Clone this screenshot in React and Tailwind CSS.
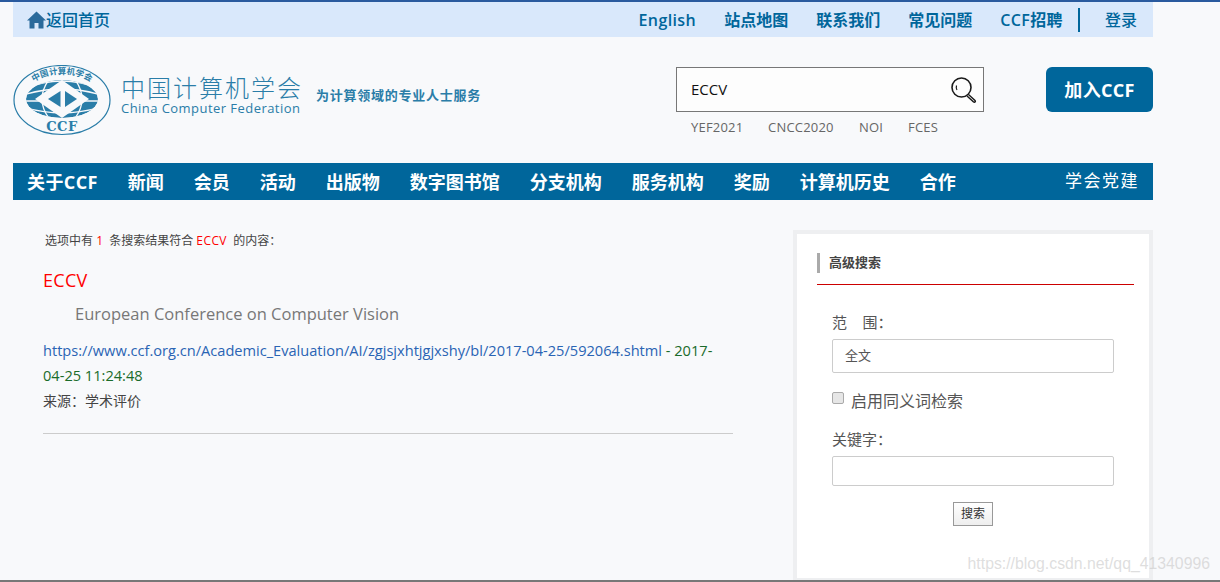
const FONT = { fontFamily: '"Open Sans", "Noto Sans CJK SC", sans-serif' };

const TOP_LINKS = [
  ["English", "tracking-[0.4px]"],
  ["站点地图", ""],
  ["联系我们", ""],
  ["常见问题", ""],
  ["CCF招聘", "tracking-[0.4px]"],
];
const NAV = [
  ["关于CCF", "tracking-[0.4px]"],
  ["新闻", ""],
  ["会员", ""],
  ["活动", ""],
  ["出版物", ""],
  ["数字图书馆", ""],
  ["分支机构", ""],
  ["服务机构", ""],
  ["奖励", ""],
  ["计算机历史", ""],
  ["合作", ""],
];
const HOT = [
  ["YEF2021", "w-[77px]"],
  ["CNCC2020", "w-[91px]"],
  ["NOI", "w-[49px]"],
  ["FCES", "w-auto"],
];

function Logo() {
  const blue = "#2a7da8";
  return (
    <svg width="98" height="71" viewBox="0 0 98 71" className="shrink-0">
      <defs>
        <path id="ccf-arc" d="M9 36 A40 27 0 0 1 89 36" />
        <clipPath id="ccf-globe">
          <ellipse cx="49" cy="34" rx="36" ry="19" />
        </clipPath>
      </defs>
      <ellipse cx="49" cy="35" rx="48" ry="34.5" fill="none" stroke={blue} strokeWidth="1.2" />
      <text fontSize="8.5" fontWeight="700" fill={blue} style={FONT}>
        <textPath href="#ccf-arc" startOffset="50%" textAnchor="middle">中国计算机学会</textPath>
      </text>
      {/* globe: solid ellipse cut by meridians and parallels */}
      <g clipPath="url(#ccf-globe)">
        <ellipse cx="49" cy="34" rx="36" ry="19" fill={blue} />
        <g fill="none" stroke="#f8f9fb" strokeWidth="1.3">
          <path d="M10 24 Q49 8 88 24" />
          <path d="M10 30 Q49 18 88 30" />
          <path d="M10 36 H88" />
          <path d="M10 42 Q49 54 88 42" />
          <path d="M10 48 Q49 62 88 48" />
          <path d="M38 12 Q20 34 38 56" />
          <path d="M60 12 Q78 34 60 56" />
        </g>
      </g>
      <path d="M22 34 L49 15 L76 34 L49 53 Z" fill="#f8f9fb" />
      <path d="M47.5 26 V42 L35 34 Z" fill={blue} />
      <path d="M52 26 V42 L64 34 Z" fill={blue} />
      <text x="49" y="66" fontSize="13" fontWeight="700" textAnchor="middle" letterSpacing="0.6" fill={blue} style={{ fontFamily: '"DejaVu Serif", serif' }}>CCF</text>
    </svg>
  );
}

function SearchGlass() {
  return (
    <svg width="28" height="28" viewBox="0 0 28 28" fill="none" stroke="#1a1a1a">
      <circle cx="11.5" cy="11.5" r="9.5" strokeWidth="1.6" />
      <path d="M6.5 9.5 Q5.8 12 7 14" strokeWidth="1.2" />
      <path d="M18.5 18.5 L25 24.5 Q26 26 24.5 26.2 Q23.5 26.3 22.5 25 L17 20" strokeWidth="1.4" />
    </svg>
  );
}

export default function App() {
  return (
    <div className="relative h-[582px] overflow-hidden bg-[#f8f9fb] border-t-2 border-b-2 border-t-[#2a5a9e] border-b-[#777]" style={FONT}>
      <div className="ml-[13px] w-[1140px]">
        {/* top strip */}
        <div className="flex items-center h-[35px] bg-[#d9e8fb] pl-[14px] pr-[16px] text-[#00669b] text-base">
          <svg width="19" height="18" viewBox="0 0 19 18" className="shrink-0">
            <path d="M9.5 0.5 L19 9.5 H16.5 V17.5 H11.5 V12 H7.5 V17.5 H2.5 V9.5 H0 Z" fill="#2b6a9b" />
          </svg>
          <span className="font-medium">返回首页</span>
          <div className="ml-auto flex items-center gap-7 font-semibold">
            {TOP_LINKS.map(([t, c]) => (
              <span key={t} className={c}>{t}</span>
            ))}
          </div>
          <span className="w-0.5 h-6 bg-[#00669b] ml-[15px] mr-[25px]" />
          <span className="font-medium">登录</span>
        </div>

        {/* logo + search */}
        <div className="flex h-[126px]">
          <div className="flex items-start pt-[28px]">
            <Logo />
            <div className="ml-[10px] mt-[11px] text-[#2a7da8]">
              <div className="text-2xl leading-[24px] tracking-[2px] whitespace-nowrap font-light">中国计算机学会</div>
              <div className="mt-[1px] text-[13px] leading-[15px] tracking-[0.45px] whitespace-nowrap">China Computer Federation</div>
            </div>
            <div className="ml-[13px] mt-[20px] text-[13px] leading-5 tracking-[0.75px] font-semibold text-[#2a7da8] whitespace-nowrap">为计算领域的专业人士服务</div>
          </div>
          <div className="ml-auto pt-[30px] w-[308px] mr-[62px]">
            <div className="flex items-center justify-between h-[45px] border border-[#777] bg-[#fdfdfd] pl-[14px] pr-[5px]">
              <span className="text-[15px] text-[#111]">ECCV</span>
              <SearchGlass />
            </div>
            <div className="flex pl-[15px] mt-[7px] text-[13px] tracking-[0.2px] leading-[16px] text-[#666]">
              {HOT.map(([t, w]) => (
                <span key={t} className={w}>{t}</span>
              ))}
            </div>
          </div>
          <div className="pt-[30px]">
            <div className="flex items-center justify-center w-[107px] h-[45px] rounded-md bg-[#00669b] text-white text-lg font-bold tracking-[0.3px]">加入CCF</div>
          </div>
        </div>

        {/* main nav */}
        <div className="flex items-center h-[37px] bg-[#00669b] pl-[14px] pr-[14px] text-white text-lg font-bold">
          <div className="flex gap-[30px]">
            {NAV.map(([t, c]) => (
              <span key={t} className={c}>{t}</span>
            ))}
          </div>
          <span className="ml-auto font-normal text-[17px] tracking-[1.5px]">学会党建</span>
        </div>

        {/* body */}
        <div className="flex pt-[30px]">
          <div className="w-[690px] ml-[30px]">
            <p className="mt-[1px] pl-[2px] text-xs leading-[20px] text-[#444] whitespace-pre">
              选项中有 <span className="text-[#f00]">1</span>  条搜索结果符合 <span className="text-[#f00] tracking-[0.4px]">ECCV</span>  的内容：
            </p>
            <h3 className="mt-[17px] text-lg tracking-[0.3px] leading-[24px] text-[#f00]">ECCV</h3>
            <p className="mt-[10px] pl-[32px] text-[16.5px] leading-[24px] text-[#777]">European Conference on Computer Vision</p>
            <p className="mt-[12px] text-[14.6px] leading-[25px] text-[#1a6b2a]">
              <span className="text-[#2a64b4]">https://www.ccf.org.cn/Academic_Evaluation/AI/zgjsjxhtjgjxshy/bl/2017-04-25/592064.shtml</span> - 2017-04-25 11:24:48
            </p>
            <p className="mt-[1px] text-sm leading-[24px] text-[#444]">来源：学术评价</p>
            <div className="mt-[20px] h-px bg-[#ccc]" />
          </div>

          <aside className="ml-[60px] w-[360px] h-[352px] border-4 border-[#eeeff1] bg-white pt-[19px] px-[20px]">
            <div className="flex items-center h-[20px] border-l-[3px] border-[#aaa] pl-[9px] text-[13px] font-bold text-[#444]">高级搜索</div>
            <div className="mt-[11px] h-px bg-[#c00] w-[317px]" />
            <div className="pl-[15px] w-[297px]">
              <label className="block mt-[26px] text-[15px] leading-[22px] text-[#555] whitespace-pre">范    围：</label>
              <div className="mt-[6px] flex items-center h-[34px] border border-[#ccc] rounded-[2px] pl-[12px] text-[13px] text-[#555]">全文</div>
              <div className="mt-[16px] flex items-start h-[24px]">
                <span className="mt-[3px] w-3 h-3 rounded-[2px] border border-[#aaa] bg-[#e6e6e6]" />
                <span className="ml-[7px] text-base leading-[24px] text-[#555]">启用同义词检索</span>
              </div>
              <label className="block mt-[15px] text-[15px] leading-[22px] text-[#555]">关键字：</label>
              <div className="mt-[6px] h-[30px] border border-[#ccc] rounded-[2px]" />
              <div className="mt-[16px] flex justify-center">
                <button className="w-[40px] h-[24px] border border-[#999] bg-gradient-to-b from-white to-[#eee] text-xs text-[#333]">搜索</button>
              </div>
            </div>
          </aside>
        </div>
      </div>

      {/* csdn watermark */}
      <div className="absolute right-[10px] bottom-[6px] text-[15.8px] leading-5 text-[#c8c8c8]/60" style={{ fontFamily: '"Liberation Sans", sans-serif' }}>
        https://blog.csdn.net/qq_41340996
      </div>
    </div>
  );
}
